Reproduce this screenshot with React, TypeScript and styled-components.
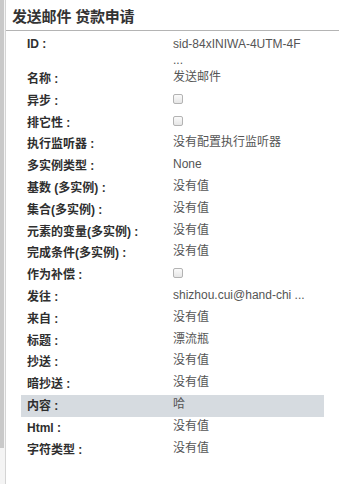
import React from 'react'
import styled, { createGlobalStyle } from 'styled-components'

const GlobalStyle = createGlobalStyle`
  html, body {
    margin: 0;
    padding: 0;
    background: #ffffff;
  }
  body {
    font-family: "Liberation Sans", "Noto Sans CJK SC", sans-serif;
    font-size: 12px;
    color: #333333;
  }
`

const Page = styled.div`
  display: flex;
  width: 339px;
  height: 484px;
  overflow: hidden;
  background: #ffffff;
`

const Rail = styled.div`
  width: 5px;
  flex: none;
  border-right: 1px solid #d4d4d4;
  background: #f4f4f4;
  display: flex;
  flex-direction: column;
`

const RailThumb = styled.div`
  width: 4px;
  height: 448px;
  background: #c9c9c9;
`

const Panel = styled.div`
  flex: 1;
  display: flex;
  flex-direction: column;
`

const Header = styled.div`
  height: 31px;
  border-bottom: 1px solid #b4b4b4;
  display: flex;
  align-items: center;
  padding-left: 6px;
  padding-top: 1px;
  box-sizing: border-box;
`

const Title = styled.h1`
  margin: 0;
  font-size: 15px;
  font-weight: bold;
  color: #333333;
  letter-spacing: -0.2px;
`

const Table = styled.div`
  display: flex;
  flex-direction: column;
  padding-left: 15px;
  width: 303px;
  margin-top: 1px;
`

const Row = styled.div<{ $tall?: boolean; $active?: boolean }>`
  display: flex;
  align-items: flex-start;
  height: ${({ $tall }) => ($tall ? '36px' : '21.8px')};
  background: ${({ $active }) => ($active ? '#d6dbe0' : 'transparent')};
`

const Label = styled.div<{ $tall?: boolean }>`
  width: 146px;
  flex: none;
  padding-left: 6px;
  padding-top: ${({ $tall }) => ($tall ? '4px' : '3px')};
  font-weight: bold;
  color: #2f2f2f;
  line-height: 16px;
  white-space: nowrap;
`

const Value = styled.div<{ $tall?: boolean }>`
  flex: 1;
  padding-top: ${({ $tall }) => ($tall ? '4px' : '1px')};
  color: #555555;
  line-height: ${({ $tall }) => ($tall ? '16px' : '16px')};
  white-space: nowrap;
`

const Check = styled.span`
  display: inline-block;
  width: 8px;
  height: 8px;
  margin-top: 3px;
  border: 1px solid #b3b3b3;
  border-radius: 2px;
  background: linear-gradient(#fafafa, #e6e6e6);
`

type Field = { label: string; value?: string; check?: boolean; tall?: boolean; active?: boolean }

const fields: Field[] = [
  { label: 'ID :', value: 'sid-84xINIWA-4UTM-4F', tall: true },
  { label: '名称 :', value: '发送邮件' },
  { label: '异步 :', check: true },
  { label: '排它性 :', check: true },
  { label: '执行监听器 :', value: '没有配置执行监听器' },
  { label: '多实例类型 :', value: 'None' },
  { label: '基数 (多实例) :', value: '没有值' },
  { label: '集合(多实例) :', value: '没有值' },
  { label: '元素的变量(多实例) :', value: '没有值' },
  { label: '完成条件(多实例) :', value: '没有值' },
  { label: '作为补偿 :', check: true },
  { label: '发往 :', value: 'shizhou.cui@hand-chi ...' },
  { label: '来自 :', value: '没有值' },
  { label: '标题 :', value: '漂流瓶' },
  { label: '抄送 :', value: '没有值' },
  { label: '暗抄送 :', value: '没有值' },
  { label: '内容 :', value: '哈', active: true },
  { label: 'Html :', value: '没有值' },
  { label: '字符类型 :', value: '没有值' },
]

export default function App() {
  return (
    <>
      <GlobalStyle />
      <Page>
        <Rail>
          <RailThumb />
        </Rail>
        <Panel>
          <Header>
            <Title>发送邮件 贷款申请</Title>
          </Header>
          <Table>
            {fields.map((f) => (
              <Row key={f.label} $tall={f.tall} $active={f.active}>
                <Label $tall={f.tall}>{f.label}</Label>
                <Value $tall={f.tall}>
                  {f.check ? (
                    <Check />
                  ) : f.tall ? (
                    <>
                      {f.value}
                      <br />
                      ...
                    </>
                  ) : (
                    f.value
                  )}
                </Value>
              </Row>
            ))}
          </Table>
        </Panel>
      </Page>
    </>
  )
}
